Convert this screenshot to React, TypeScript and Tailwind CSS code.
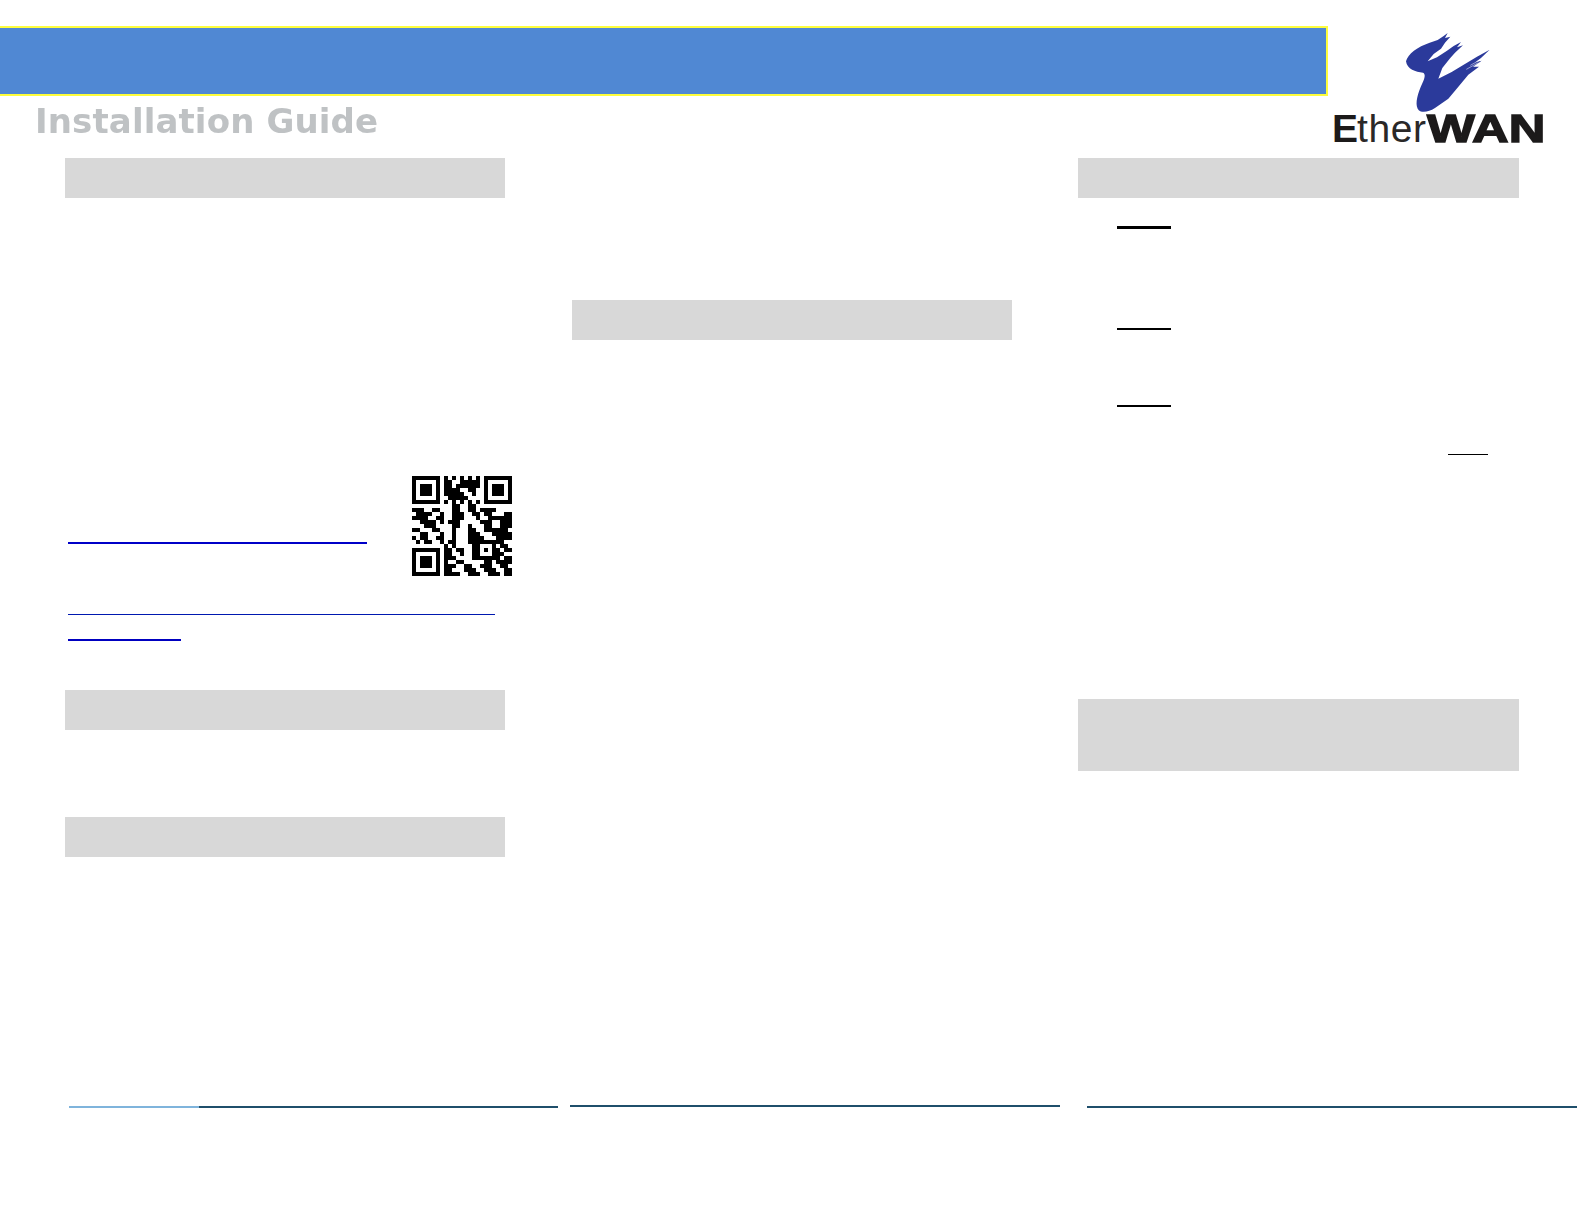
const qrRows = [
  "1111111010101010101111111",
  "1000001011001111101000001",
  "1011101011011111101011101",
  "1011101011110011001011101",
  "1011101011111001001011101",
  "1000001001111100001000001",
  "1111111010101010101111111",
  "0000000000110011000000000",
  "1110011000110011011110000",
  "0111100100111001101100011",
  "1111001100111000100111111",
  "0011110101110000011100111",
  "0001110000110010001100111",
  "1100011000100011001111110",
  "0011000100100011100011111",
  "1011001100100011110001111",
  "0101100101100011111111100",
  "0000000010100001100010110",
  "1111111011011001101011011",
  "1000001011001001100011100",
  "1011101011100001111111011",
  "1011101010011000001101111",
  "1011101011100110011100110",
  "1000001011000111001110011",
  "1111111011110011100111011",
];

function QrCode() {
  return (
    <svg width="100" height="100" viewBox="0 0 25 25" shapeRendering="crispEdges" className="shrink-0">
      {qrRows.map((row, y) =>
        row.split("").map((cell, x) => (cell === "1" ? <rect key={`${x}-${y}`} x={x} y={y} width="1" height="1" fill="#000" /> : null)),
      )}
    </svg>
  );
}

function Swoosh() {
  return (
    <svg width="100" height="90" viewBox="0 0 300 270" className="block">
      <path
        fill="#2b3a9b"
        d="M33 100 C38 78 68 56 104 44 L128 36 L146 24 L158 15 L150 30 L166 26 L150 44 L138 62 L116 78 L98 100 L126 88 L156 68 L176 54 L198 42 L186 58 L204 52 L180 74 L164 92 L142 120 L130 152 L170 132 L206 110 L246 86 L284 65 L258 90 L242 102 L260 98 L234 116 L252 116 L220 140 L192 174 L160 212 L120 240 C98 254 76 256 68 242 C60 226 68 196 82 166 C90 148 92 138 84 134 C62 132 36 124 33 100 Z"
      />
      <path stroke="#fff" strokeWidth="1.5" fill="none" d="M226 112 L262 92 M214 124 L250 104" />
    </svg>
  );
}

function Logo() {
  return (
    <div className="ml-[4px] flex flex-col items-start pt-[2px]">
      <div className="ml-[63px]">
        <Swoosh />
      </div>
      <div className="-mt-[8px] flex h-[37px] items-center whitespace-nowrap text-[39px] leading-none text-[#1c1a1a] [font-family:'Liberation_Sans',sans-serif]">
        <span className="font-bold">E</span>
        <span className="ml-[-1px] tracking-[0.6px] text-[#2a2828]">ther</span>
        <span className="origin-left scale-x-[1.3] font-bold [-webkit-text-stroke:1.4px_#1c1a1a]">WAN</span>
      </div>
    </div>
  );
}

function Band({ className }: { className: string }) {
  return <div className={`bg-[#d8d8d8] ${className}`} />;
}

export default function App() {
  return (
    <main className="h-[1224px] w-[1584px] overflow-hidden bg-white pt-[26px]">
      <header className="flex h-[132px] items-start">
        <div className="w-[1328px]">
          <div className="h-[70px] border-2 border-l-0 border-[#fdfd3c] bg-[#5088d3]" />
          <h1 className="ml-[35px] mt-[3px] text-[34px] font-bold leading-[44px] tracking-[0.12px] text-[#bfc2c4] blur-[0.4px] [font-family:'DejaVu_Sans',sans-serif]">
            Installation Guide
          </h1>
        </div>
        <Logo />
      </header>

      <div className="flex items-start">
        <section className="ml-[65px] w-[493px]">
          <Band className="h-[40px] w-[440px]" />
          <div className="mt-[278px] flex h-[100px] items-start pl-[3px]">
            <div className="mt-[66px] h-[2px] w-[299px] bg-[#0000c8]" />
            <div className="ml-[45px]">
              <QrCode />
            </div>
          </div>
          <div className="ml-[3px] mt-[38px] h-px w-[427px] bg-[#0018b0]" />
          <div className="ml-[3px] mt-[24px] h-[2px] w-[113px] bg-[#0000c0]" />
          <Band className="mt-[49px] h-[40px] w-[440px]" />
          <Band className="mt-[87px] h-[40px] w-[440px]" />
          <div className="ml-[4px] mt-[249px] flex h-[2px] w-[489px]">
            <div className="w-[130px] bg-[#7fb4dc]" />
            <div className="flex-1 bg-[#1f4f6b]" />
          </div>
        </section>

        <section className="ml-[12px] w-[490px]">
          <Band className="ml-[2px] mt-[142px] h-[40px] w-[440px]" />
          <div className="mt-[765px] h-[2px] w-[490px] bg-[#1f4f6b]" />
        </section>

        <section className="ml-[18px] w-[500px]">
          <Band className="h-[40px] w-[441px]" />
          <div className="ml-[39px] mt-[28px] h-[3px] w-[54px] bg-black" />
          <div className="ml-[39px] mt-[99px] h-[2px] w-[54px] bg-black" />
          <div className="ml-[39px] mt-[75px] h-[2px] w-[54px] bg-black" />
          <div className="ml-[370px] mt-[47px] h-px w-[40px] bg-black" />
          <Band className="mt-[244px] h-[72px] w-[441px]" />
          <div className="ml-[9px] mt-[335px] h-[2px] w-[490px] bg-[#1f4f6b]" />
        </section>
      </div>
    </main>
  );
}
